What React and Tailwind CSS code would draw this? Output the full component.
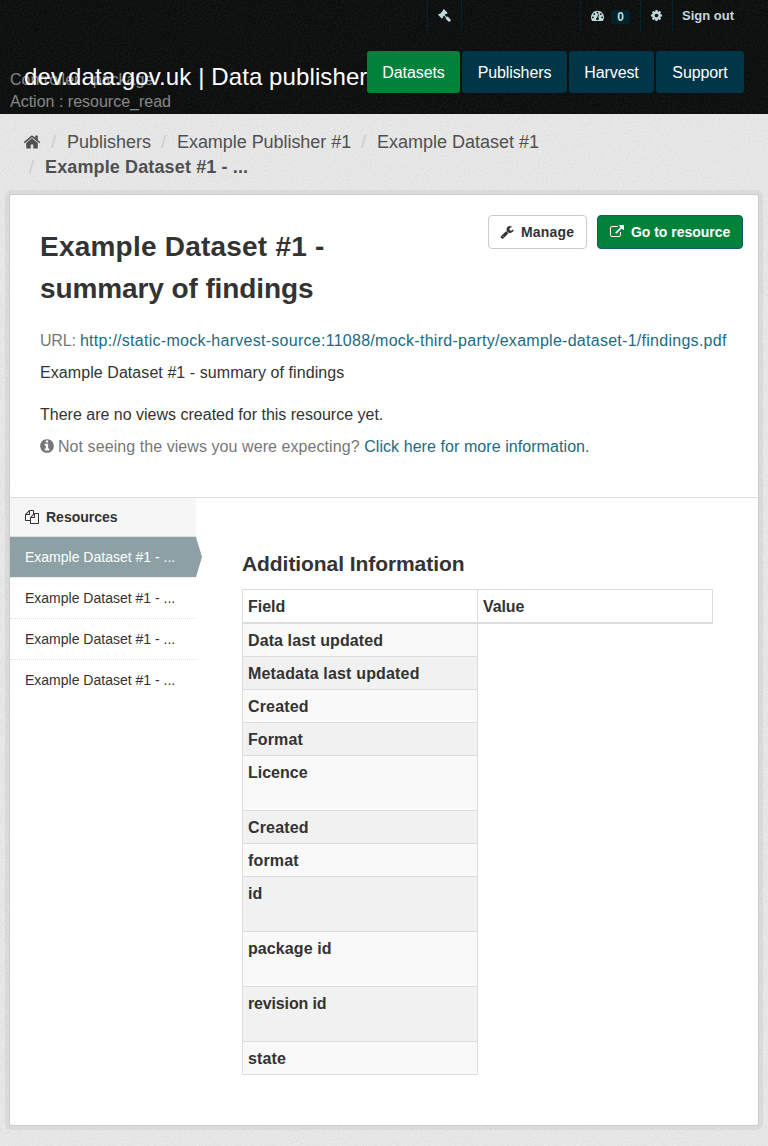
const ICONS = {
  home: "M1472 992v480q0 26-19 45t-45 19h-384v-384h-256v384h-384q-26 0-45-19t-19-45v-480q0-1 .5-3t.5-3l575-474 575 474q1 2 1 6zm223-69l-62 74q-8 9-21 11h-3q-13 0-21-7l-692-577-692 577q-12 8-24 7-13-2-21-11l-62-74q-8-10-7-23.5t11-21.5l719-599q32-26 76-26t76 26l244 204v-195q0-14 9-23t23-9h192q14 0 23 9t9 23v408l219 182q10 8 11 21.5t-7 23.5z",
  wrench: "M448 1472q0-26-19-45t-45-19-45 19-19 45 19 45 45 19 45-19 19-45zm644-420l-682 682q-37 37-90 37-52 0-91-37l-106-108q-38-36-38-90 0-53 38-91l681-681q39 98 114.5 173.5t173.5 114.5zm634-435q0 39-23 106-47 134-164.5 217.5t-258.5 83.5q-185 0-316.5-131.5t-131.5-316.5 131.5-316.5 316.5-131.5q58 0 121.5 16.5t107.5 46.5q16 11 16 28t-16 28l-293 169v224l193 107q5-3 79-48.5t135.5-81 70.5-35.5q15 0 23.5 10t8.5 25z",
  external: "M1408 928v320q0 119-84.5 203.5t-203.5 84.5h-832q-119 0-203.5-84.5t-84.5-203.5v-832q0-119 84.5-203.5t203.5-84.5h704q14 0 23 9t9 23v64q0 14-9 23t-23 9h-704q-66 0-113 47t-47 113v832q0 66 47 113t113 47h832q66 0 113-47t47-113v-320q0-14 9-23t23-9h64q14 0 23 9t9 23zm384-864v512q0 26-19 45t-45 19-45-19l-176-176-652 652q-10 10-23 10t-23-10l-114-114q-10-10-10-23t10-23l652-652-176-176q-19-19-19-45t19-45 45-19h512q26 0 45 19t19 45z",
  info: "M1152 1376v-160q0-14-9-23t-23-9h-96v-512q0-14-9-23t-23-9h-320q-14 0-23 9t-9 23v160q0 14 9 23t23 9h96v320h-96q-14 0-23 9t-9 23v160q0 14 9 23t23 9h448q14 0 23-9t9-23zm-128-896v-160q0-14-9-23t-23-9h-192q-14 0-23 9t-9 23v160q0 14 9 23t23 9h192q14 0 23-9t9-23zm640 416q0 209-103 385.5t-279.5 279.5-385.5 103-385.5-103-279.5-279.5-103-385.5 103-385.5 279.5-279.5 385.5-103 385.5 103 279.5 279.5 103 385.5z",
  cog: "M1152 896q0-106-75-181t-181-75-181 75-75 181 75 181 181 75 181-75 75-181zm512-109v222q0 12-8 23t-20 13l-185 28q-19 54-39 91 35 50 107 138 10 12 10 25t-9 23q-27 37-99 108t-94 71q-12 0-26-9l-138-108q-44 23-91 38-16 136-29 186-7 28-36 28h-222q-14 0-24.5-8.5t-11.5-21.5l-28-184q-49-16-90-37l-141 107q-10 9-25 9-14 0-25-11-126-114-165-168-7-10-7-23 0-12 8-23 15-21 51-66.5t54-70.5q-27-50-41-99l-183-27q-13-2-21-12.5t-8-23.5v-222q0-12 8-23t19-13l186-28q14-46 39-92-40-57-107-138-10-12-10-24 0-10 9-23 26-36 98.5-107.5t94.5-71.5q13 0 26 10l138 107q44-23 91-38 16-136 29-186 7-28 36-28h222q14 0 24.5 8.5t11.5 21.5l28 184q49 16 90 37l142-107q9-9 24-9 13 0 25 10 129 119 165 170 7 8 7 22 0 12-8 23-15 21-51 66.5t-54 70.5q26 50 41 98l183 28q13 2 21 12.5t8 23.5z",
  dashboard: "M384 1152q0-53-37.5-90.5t-90.5-37.5-90.5 37.5-37.5 90.5 37.5 90.5 90.5 37.5 90.5-37.5 37.5-90.5zm192-448q0-53-37.5-90.5t-90.5-37.5-90.5 37.5-37.5 90.5 37.5 90.5 90.5 37.5 90.5-37.5 37.5-90.5zm428 481l101-382q6-26-7.5-48.5t-38.5-29.5-48 6.5-30 39.5l-101 382q-60 5-107 43.5t-63 98.5q-20 77 20 146t117 89 146-20 89-117q16-60-6-117t-72-91zm660-33q0-53-37.5-90.5t-90.5-37.5-90.5 37.5-37.5 90.5 37.5 90.5 90.5 37.5 90.5-37.5 37.5-90.5zm-640-640q0-53-37.5-90.5t-90.5-37.5-90.5 37.5-37.5 90.5 37.5 90.5 90.5 37.5 90.5-37.5 37.5-90.5zm448 192q0-53-37.5-90.5t-90.5-37.5-90.5 37.5-37.5 90.5 37.5 90.5 90.5 37.5 90.5-37.5 37.5-90.5zm320 448q0 261-141 483-19 29-54 29h-1402q-35 0-54-29-141-221-141-483 0-182 71-348t191-286 286-191 348-71 348 71 286 191 191 286 71 348z",
  gavel: "M1771 1536q0 53-37 90l-107 108q-39 37-91 37-53 0-90-37l-363-364q-38-36-38-90 0-53 43-96l-256-256-126 126q-14 14-34 14t-34-14q2 2 12.5 12t12.5 13 10 11.5 10 13.5 6 13.5 5.5 16.5 1.5 18q0 38-28 68-3 3-16.5 18t-19 20.5-18.5 16.5-22 15.5-22 9-26 4.5q-40 0-68-28l-408-408q-28-28-28-68 0-13 4.5-26t9-22 15.5-22 16.5-18.5 20.5-19 18-16.5q30-28 68-28 10 0 18 1.5t16.5 5.5 13.5 6 13.5 10 11.5 10 13 12.5 12 12.5q-14-14-14-34t14-34l348-348q14-14 34-14t34 14q-2-2-12.5-12t-12.5-13-10-11.5-10-13.5-6-13.5-5.5-16.5-1.5-18q0-38 28-68 3-3 16.5-18t19-20.5 18.5-16.5 22-15.5 22-9 26-4.5q40 0 68 28l408 408q28 28 28 68 0 13-4.5 26t-9 22-15.5 22-16.5 18.5-20.5 19-18 16.5q-30 28-68 28-10 0-18-1.5t-16.5-5.5-13.5-6-13.5-10-11.5-10-13-12.5-12-12.5q14 14 14 34t-14 34l-126 126 256 256q43-43 96-43 52 0 91 37l363 363q37 39 37 91z",
  files: "M1696 384q40 0 68 28t28 68v1216q0 40-28 68t-68 28h-960q-40 0-68-28t-28-68v-288h-544q-40 0-68-28t-28-68v-672q0-40 20-88t48-76l408-408q28-28 76-48t88-20h416q40 0 68 28t28 68v328q68-40 128-40h416zm-544 213l-299 299h299v-299zm-640-384l-299 299h299v-299zm196 647l316-316v-416h-384v416q0 40-28 68t-68 28h-416v640h512v-256q0-40 20-88t48-76zm956 804v-1152h-384v416q0 40-28 68t-68 28h-416v640h896z",
};

function Icon({ name, className }) {
  return (
    <svg viewBox="0 0 1792 1792" fill="currentColor" className={`shrink-0 ${className}`} aria-hidden="true">
      <path d={ICONS[name]} />
    </svg>
  );
}

function Grain({ id, className }) {
  return (
    <svg className={`pointer-events-none absolute inset-0 h-full w-full ${className}`} aria-hidden="true">
      <filter id={id}>
        <feTurbulence type="fractalNoise" baseFrequency="0.6" numOctaves="2" stitchTiles="stitch" />
        <feColorMatrix values="0 0 0 0 1  0 0 0 0 1  0 0 0 0 1  1.6 0 0 0 -0.5" />
      </filter>
      <rect width="100%" height="100%" filter={`url(#${id})`} />
    </svg>
  );
}

const NAV = [
  ["Datasets", "w-[93px] bg-[#00823b]"],
  ["Publishers", "w-[105px] bg-[#003647]"],
  ["Harvest", "w-[85px] bg-[#003647]"],
  ["Support", "w-[88px] bg-[#003647]"],
];

function Header() {
  return (
    <header className="relative h-[114px] bg-[#0b0c0c]">
      <Grain id="grain-dark" className="opacity-[0.06]" />
      <div className="relative flex h-[31px] pl-[427px] text-[13px] font-bold text-[#c0d8df]">
        <div className="flex w-[35px] justify-center border-x border-[#00232e] pt-[9px]">
          <Icon name="gavel" className="h-[13px] w-[13px]" />
        </div>
        <div className="ml-[118px] flex w-[60px] border-l border-[#00232e] pl-[10px] pt-[9px]">
          <Icon name="dashboard" className="h-[13px] w-[13px]" />
          <span className="ml-[7px] mt-px flex h-[14px] w-[19px] items-center justify-center rounded-[3px] bg-[#00232e] text-[12px]">0</span>
        </div>
        <div className="flex w-8 border-l border-[#00232e] pl-[9px] pt-[9px]">
          <Icon name="cog" className="h-[13px] w-[13px]" />
        </div>
        <div className="border-l border-[#00232e] pl-[9px] leading-[31px]">Sign out</div>
      </div>
      <div className="relative flex pl-6 pt-5">
        <h1 className="w-[343px] whitespace-nowrap pt-[11px] text-[24px] leading-[30px] tracking-[0.1px] text-white">dev.data.gov.uk | Data publisher</h1>
        <nav className="flex gap-0.5">
          {NAV.map(([label, cls]) => (
            <a key={label} className={`flex h-[42px] items-center justify-center rounded-[3px] pt-0.5 text-base tracking-[-0.1px] text-white ${cls}`}>{label}</a>
          ))}
        </nav>
      </div>
      <div className="absolute left-[10px] top-[69px] text-base leading-[22px] text-white/50">
        <div>Controller : package</div>
        <div>Action : resource_read</div>
      </div>
    </header>
  );
}

const Slash = ({ className }) => <span className={`text-[#ccc] ${className}`}>/</span>;

function Breadcrumb() {
  return (
    <div className="relative h-[81px] pt-4 text-[18px] leading-[25px] text-[#505050]">
      <div className="flex items-center pl-[23px]">
        <Icon name="home" className="-mt-0.5 h-[18px] w-[18px]" />
        <Slash className="ml-[10px] w-[16px]" />
        <span className="w-[94px]">Publishers</span>
        <Slash className="w-[16px]" />
        <span className="w-[184px] tracking-[-0.05px]">Example Publisher #1</span>
        <Slash className="w-[16px]" />
        <span>Example Dataset #1</span>
      </div>
      <div className="flex pl-[29px]">
        <Slash className="w-[16px]" />
        <b className="tracking-[0.13px]">Example Dataset #1 - ...</b>
      </div>
    </div>
  );
}

const ROWS = [
  ["Data last updated", "h-[33px] tracking-[0.1px]"],
  ["Metadata last updated", "h-[33px] tracking-[0.17px]"],
  ["Created", "h-[33px] tracking-[0.15px]"],
  ["Format", "h-[33px] tracking-[0.1px]"],
  ["Licence", "h-[55px]"],
  ["Created", "h-[33px] tracking-[0.15px]"],
  ["format", "h-[33px] tracking-[0.15px]"],
  ["id", "h-[55px]"],
  ["package id", "h-[55px] tracking-[0.1px]"],
  ["revision id", "h-[55px] tracking-[-0.15px]"],
  ["state", "h-[33px] tracking-[0.15px]"],
];

export default function App() {
  return (
    <div className="relative min-h-[1146px] w-[768px] overflow-hidden bg-[#e2e2e2] font-['Liberation_Sans',Arial,sans-serif] text-[#333]">
      <Grain id="grain-light" className="opacity-40" />
      <Header />
      <Breadcrumb />
      <main className="relative mx-[10px] h-[930px] rounded-[2px] bg-white shadow-[0_0_0_1px_#ccc,0_0_0_5px_rgba(0,0,0,0.05)]">
        <section className="h-[303px] border-b border-[#ddd] pl-[30px] pr-[15px] pt-5">
          <div className="flex items-start">
            <h2 className="mt-[11px] w-[448px] text-[28px] font-bold leading-[42px]">
              <span className="tracking-[0.22px]">Example Dataset #1 -</span>
              <br />
              <span className="tracking-[-0.1px]">summary of findings</span>
            </h2>
            <div className="flex gap-[10px] text-[14px] font-bold">
              <a className="flex h-[34px] w-[99px] items-center rounded-[4px] border border-[#ccc] pl-[11px] tracking-[0.2px]">
                <Icon name="wrench" className="mr-[7px] h-[14px] w-[14px]" />Manage
              </a>
              <a className="flex h-[34px] w-[146px] items-center whitespace-nowrap rounded-[4px] border border-[#165872] bg-[#00823b] pl-[12px] tracking-[-0.03px] text-white">
                <Icon name="external" className="mr-[7px] h-[14px] w-[14px]" />Go to resource
              </a>
            </div>
          </div>
          <p className="mt-[20px] whitespace-nowrap text-base leading-[22px] text-[#777]"><span className="tracking-[-0.2px]">URL: </span><a className="tracking-[0.272px] text-[#206b82]">http://static-mock-harvest-source:11088/mock-third-party/example-dataset-1/findings.pdf</a></p>
          <p className="mt-[10px] text-base leading-[22px] tracking-[0.07px]">Example Dataset #1 - summary of findings</p>
          <p className="mt-[20px] text-base leading-[22px]">There are no views created for this resource yet.</p>
          <p className="mt-[10px] flex items-center whitespace-pre text-base leading-[22px] tracking-[0.07px] text-[#777]">
            <Icon name="info" className="-ml-px -mt-0.5 mr-[3px] h-4 w-4" />
            <span>Not seeing the views you were expecting? <a className="text-[#206b82]">Click here for more information.</a></span>
          </p>
        </section>
        <div className="flex">
          <aside className="w-[186px] text-[14px]">
            <h3 className="flex h-[39px] items-center border-b border-[#ddd] bg-[#f6f6f6] pl-[15px] font-bold">
              <Icon name="files" className="mr-[7px] h-[14px] w-[14px]" />Resources
            </h3>
            <div className="relative h-[41px] border-b border-dotted border-[#ddd] bg-[#8ca0a6] bg-clip-padding pl-[15px] leading-[40px] text-white">
              Example Dataset #1 - ...
              <svg className="absolute left-[186px] top-0 h-10 w-[6px]" viewBox="0 0 6 40" fill="#8ca0a6"><path d="M0 0L6 20L0 40Z" /></svg>
            </div>
            <div className="h-[41px] border-b border-dotted border-[#ddd] pl-[15px] leading-[40px]">Example Dataset #1 - ...</div>
            <div className="h-[41px] border-b border-dotted border-[#ddd] pl-[15px] leading-[40px]">Example Dataset #1 - ...</div>
            <div className="h-[41px] pl-[15px] leading-[40px]">Example Dataset #1 - ...</div>
          </aside>
          <section className="pl-[46px] pt-[52px]">
            <h3 className="h-[39px] text-[21px] font-bold leading-[27px] tracking-[-0.07px]">Additional Information</h3>
            <div className="flex h-[35px] w-[471px] border border-b-2 border-[#ddd] text-base font-bold leading-[33px]">
              <div className="w-[235px] border-r border-[#ddd] pl-[5px]">Field</div>
              <div className="pl-[5px] tracking-[-0.1px]">Value</div>
            </div>
            <div className="w-[236px] border-x border-[#ddd] text-base font-bold leading-[34px]">
              {ROWS.map(([label, height], i) => (
                <div key={i} className={`border-b border-[#ddd] pl-[5px] ${height} ${i % 2 ? "bg-[#f1f1f1]" : "bg-[#f9f9f9]"}`}>{label}</div>
              ))}
            </div>
          </section>
        </div>
      </main>
    </div>
  );
}
